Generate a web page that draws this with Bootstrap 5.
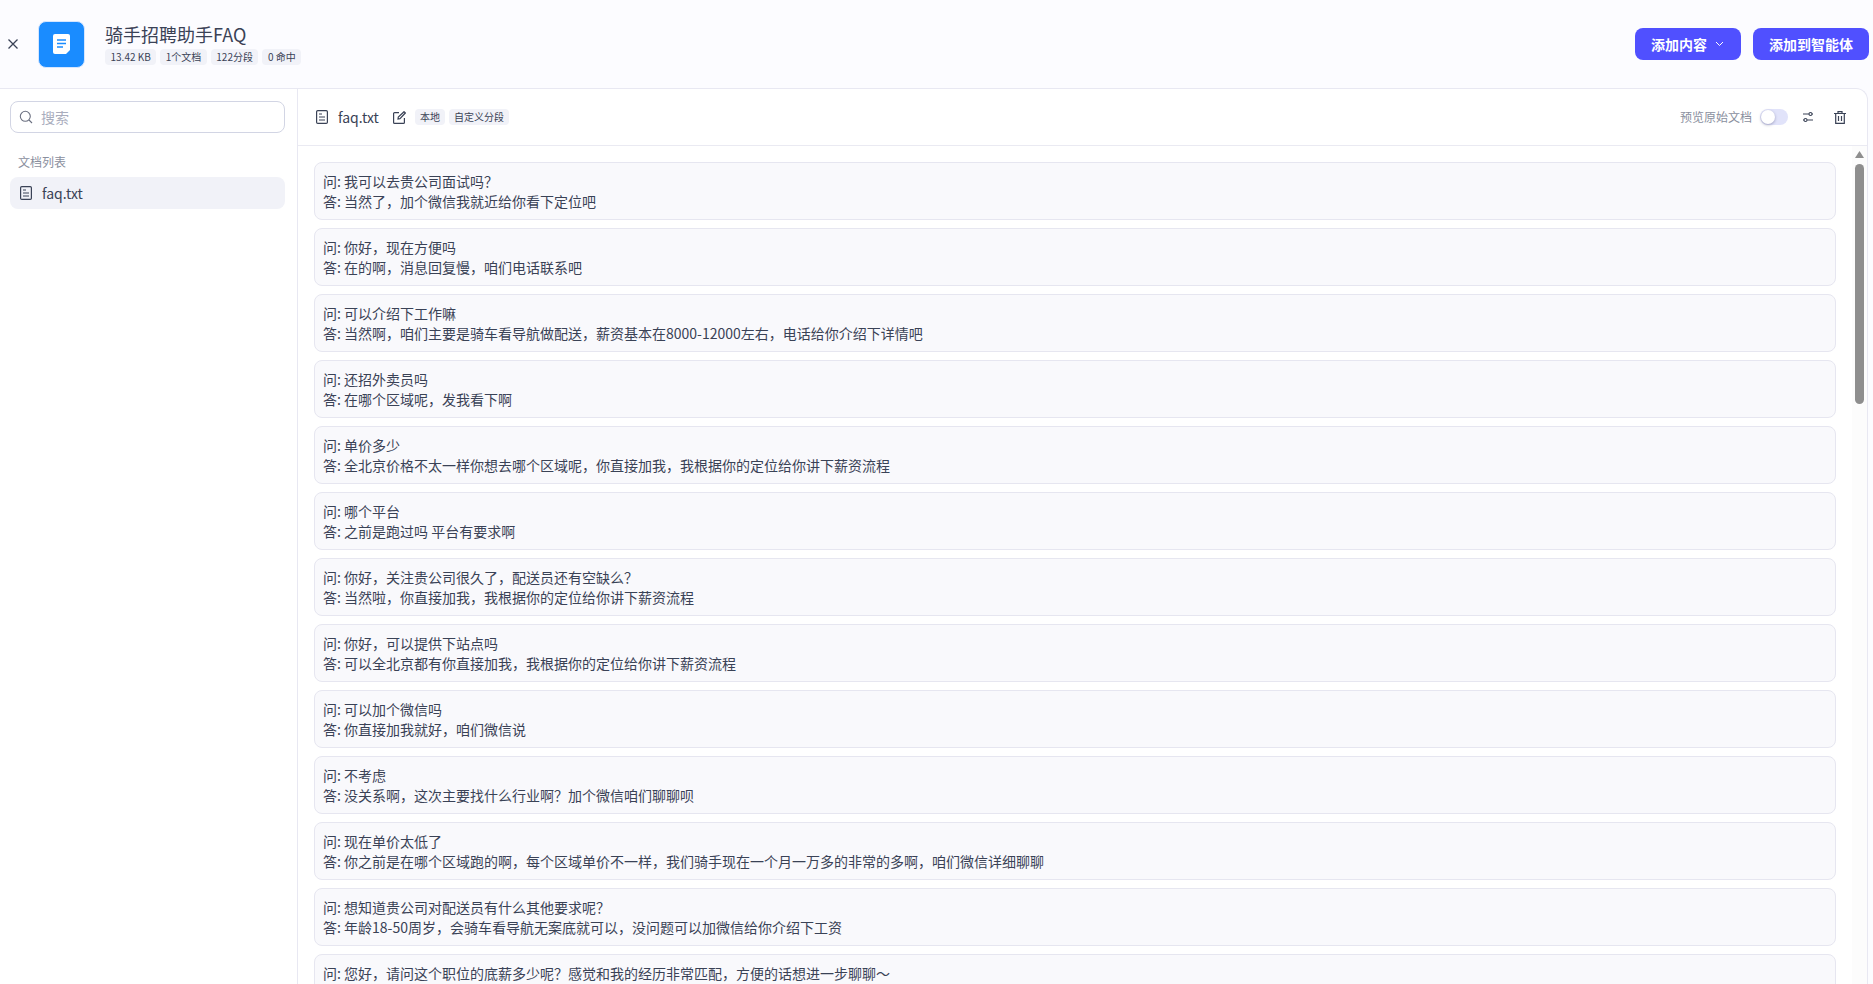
<!doctype html>
<html lang="zh"><head><meta charset="utf-8"><title>FAQ</title>
<link href="https://cdn.jsdelivr.net/npm/bootstrap@5.3.0/dist/css/bootstrap.min.css" rel="stylesheet">
<style>
html,body{height:100%;overflow:hidden}
body{background:#fcfcff;color:#3a4256;font-family:"Noto Sans CJK SC","Noto Sans",sans-serif;font-size:14px}
.top-strip{height:88px;padding:0 4px 0 6px}
.close-x{width:14px;height:14px;color:#3a4256;flex:none}
.logo-box{width:47px;height:47px;border-radius:8px;background:#1a8cff;margin-left:18px;margin-right:20px;border:1px solid #d5e6ff}
.kb-title{font-size:18px;line-height:24px;color:#3a4256;margin-top:-2px}
.tag-pill{background:#f1f2f8;border-radius:4px;font-size:10px;line-height:16px;padding:0 5px;color:#3a4256;white-space:nowrap}
.tag-row{gap:4px;margin-top:3px}
.tag-row .tag-pill{padding:0 5.5px}
.act-group{gap:12px}
.act-btn{background:#5050ff;color:#fff;border:0;border-radius:8px;height:32px;font-size:14px;font-weight:700;padding:0 16px;white-space:nowrap}
.act-btn:hover{background:#5050ff;color:#fff}
.drop-btn{width:106px}
.shell{height:896px;margin-right:5px;background:#fff;border:1px solid #e8e8f2;border-left:0;border-bottom:0;border-radius:0 12px 0 0}
.side-col{width:298px;flex:none;border-right:1px solid #e8e8f2;padding:12px 12px 12px 10px}
.search-wrap{height:32px;border:1px solid #d2d5e4;border-radius:8px;padding:0 8px;gap:8px;color:#a9adbd}
.side-label{font-size:12px;color:#8a8f9e;margin:19px 8px 5px;line-height:20px}
.side-item{height:32px;border-radius:8px;background:#f1f2f8;padding:0 10px;gap:10px;font-size:14px}
.main-col{min-width:0}
.main-head{height:57px;flex:none;border-bottom:1px solid #eaeaf2;padding:0 21px 0 18px}
.fname{font-size:14px;margin:0 14px 0 10px}
.head-tags{gap:4px;margin-left:9px}
.preview-lbl{font-size:12px;color:#8a8f9e}
.switch-fake{width:28px;height:16px;border-radius:8px;background:#e1e3fa;position:relative;margin:0 14px 0 8px}
.switch-fake::after{content:"";position:absolute;left:1px;top:1px;width:14px;height:14px;border-radius:50%;background:#fff;box-shadow:0 1px 3px rgba(30,30,80,.35)}
.trash-ico{margin-left:20px}
.list-body{flex:1;min-height:0}
.list-pane{overflow:hidden;padding:16px 16px 0 16px;flex:1;min-width:0}
.rail{width:15px;flex:none;background:#fcfcfc;padding:5px 3px 0}
.rail-arrow{display:block;margin-bottom:6px}
.rail-thumb{height:240px;background:#8e8e8e;border-radius:5px}
.qa-row{background:#f9f9fc;border:1px solid #e6e6f0;border-radius:8px;padding:8px 8px;line-height:20px;font-size:14px;margin-bottom:8px;color:#3a4256;height:58px;overflow:hidden}
</style></head><body>
<div class="top-strip d-flex align-items-center">
<svg class="close-x" viewBox="0 0 14 14" fill="none" stroke="currentColor" stroke-width="1.3"><path d="M2.500 2.500l9 9M11.500 2.500l-9 9"/></svg>
<div class="logo-box d-flex align-items-center justify-content-center flex-shrink-0"><svg width="17" height="20" viewBox="0 0 17 20"><path d="M2 0h13a2 2 0 0 1 2 2v14l-4 4H2a2 2 0 0 1-2-2V2a2 2 0 0 1 2-2z" fill="#fff"/><path d="M4 6h9M4 9.500h9M4 13h6" stroke="#1a8cff" stroke-width="1.500" fill="none"/></svg></div>
<div>
<div class="kb-title">骑手招聘助手FAQ</div>
<div class="d-flex tag-row"><span class="tag-pill">13.42 KB</span><span class="tag-pill">1个文档</span><span class="tag-pill">122分段</span><span class="tag-pill">0 命中</span></div>
</div>
<div class="ms-auto d-flex act-group">
<button class="btn act-btn drop-btn d-flex align-items-center gap-2">添加内容<svg width="9" height="6" viewBox="0 0 9 6" fill="none" stroke="#fff"><path d="M1 1l3.500 3.500L8 1"/></svg></button>
<button class="btn act-btn">添加到智能体</button>
</div>
</div>
<div class="shell d-flex">
<div class="side-col">
<div class="search-wrap d-flex align-items-center"><svg width="14" height="14" viewBox="0 0 14 14" fill="none" stroke="#6b7080" stroke-width="1.100"><circle cx="6.300" cy="6.300" r="5"/><path d="M10 10l3 3"/></svg><span>搜索</span></div>
<div class="side-label">文档列表</div>
<div class="side-item d-flex align-items-center"><svg width="12" height="14" viewBox="0 0 12 14" fill="none" stroke="#3a4256" stroke-width="1.200"><rect x=".6" y=".6" width="10.800" height="12.800" rx="1.200"/><path d="M3 4h3M3 7h6M3 10h6"/></svg><span>faq.txt</span></div>
</div>
<div class="main-col flex-grow-1 d-flex flex-column">
<div class="main-head d-flex align-items-center">
<svg width="12" height="14" viewBox="0 0 12 14" fill="none" stroke="#3a4256" stroke-width="1.200"><rect x=".6" y=".6" width="10.800" height="12.800" rx="1.200"/><path d="M3 4h3M3 7h6M3 10h6"/></svg>
<span class="fname">faq.txt</span>
<svg width="13" height="13" viewBox="0 0 13 13" fill="none" stroke="#3a4256" stroke-width="1.200"><path d="M6 1.600H1.600a1 1 0 0 0-1 1v8.800a1 1 0 0 0 1 1h8.800a1 1 0 0 0 1-1V7"/><path d="M5 8l.3-2L11 .7l1.300 1.300L7 7.700z"/></svg>
<div class="d-flex head-tags"><span class="tag-pill">本地</span><span class="tag-pill">自定义分段</span></div>
<div class="ms-auto d-flex align-items-center">
<span class="preview-lbl">预览原始文档</span><span class="switch-fake"></span>
<svg width="12" height="12" viewBox="0 0 12 12" fill="none" stroke="#3a4256" stroke-width="1.100"><path d="M1 3h6M10 3h1M1 9h1M5 9h6"/><circle cx="8.500" cy="3" r="1.500"/><circle cx="3.500" cy="9" r="1.500"/></svg>
<svg class="trash-ico" width="12" height="13" viewBox="0 0 12 13" fill="none" stroke="#3a4256" stroke-width="1.200"><path d="M0 2.500h12M4 2.500V.7h4v1.800M1.700 2.500v9.800h8.600V2.500M4.500 5v5M7.500 5v5"/></svg>
</div>
</div>
<div class="list-body d-flex">
<div class="list-pane">
<div class="qa-row">问: 我可以去贵公司面试吗？<br>答: 当然了，加个微信我就近给你看下定位吧</div>
<div class="qa-row">问: 你好，现在方便吗<br>答: 在的啊，消息回复慢，咱们电话联系吧</div>
<div class="qa-row">问: 可以介绍下工作嘛<br>答: 当然啊，咱们主要是骑车看导航做配送，薪资基本在8000-12000左右，电话给你介绍下详情吧</div>
<div class="qa-row">问: 还招外卖员吗<br>答: 在哪个区域呢，发我看下啊</div>
<div class="qa-row">问: 单价多少<br>答: 全北京价格不太一样你想去哪个区域呢，你直接加我，我根据你的定位给你讲下薪资流程</div>
<div class="qa-row">问: 哪个平台<br>答: 之前是跑过吗 平台有要求啊</div>
<div class="qa-row">问: 你好，关注贵公司很久了，配送员还有空缺么？<br>答: 当然啦，你直接加我，我根据你的定位给你讲下薪资流程</div>
<div class="qa-row">问: 你好，可以提供下站点吗<br>答: 可以全北京都有你直接加我，我根据你的定位给你讲下薪资流程</div>
<div class="qa-row">问: 可以加个微信吗<br>答: 你直接加我就好，咱们微信说</div>
<div class="qa-row">问: 不考虑<br>答: 没关系啊，这次主要找什么行业啊？加个微信咱们聊聊呗</div>
<div class="qa-row">问: 现在单价太低了<br>答: 你之前是在哪个区域跑的啊，每个区域单价不一样，我们骑手现在一个月一万多的非常的多啊，咱们微信详细聊聊</div>
<div class="qa-row">问: 想知道贵公司对配送员有什么其他要求呢？<br>答: 年龄18-50周岁，会骑车看导航无案底就可以，没问题可以加微信给你介绍下工资</div>
<div class="qa-row">问: 您好，请问这个职位的底薪多少呢？感觉和我的经历非常匹配，方便的话想进一步聊聊～<br>答: 可以的，加个微信详细聊</div>
</div>
<div class="rail"><svg class="rail-arrow" width="9" height="7" viewBox="0 0 9 7"><path d="M4.500 0L9 7H0z" fill="#8e8e8e"/></svg><div class="rail-thumb"></div></div>
</div>
</div>
</div>
<script src="https://cdn.jsdelivr.net/npm/bootstrap@5.3.0/dist/js/bootstrap.bundle.min.js"></script>
</body></html>
